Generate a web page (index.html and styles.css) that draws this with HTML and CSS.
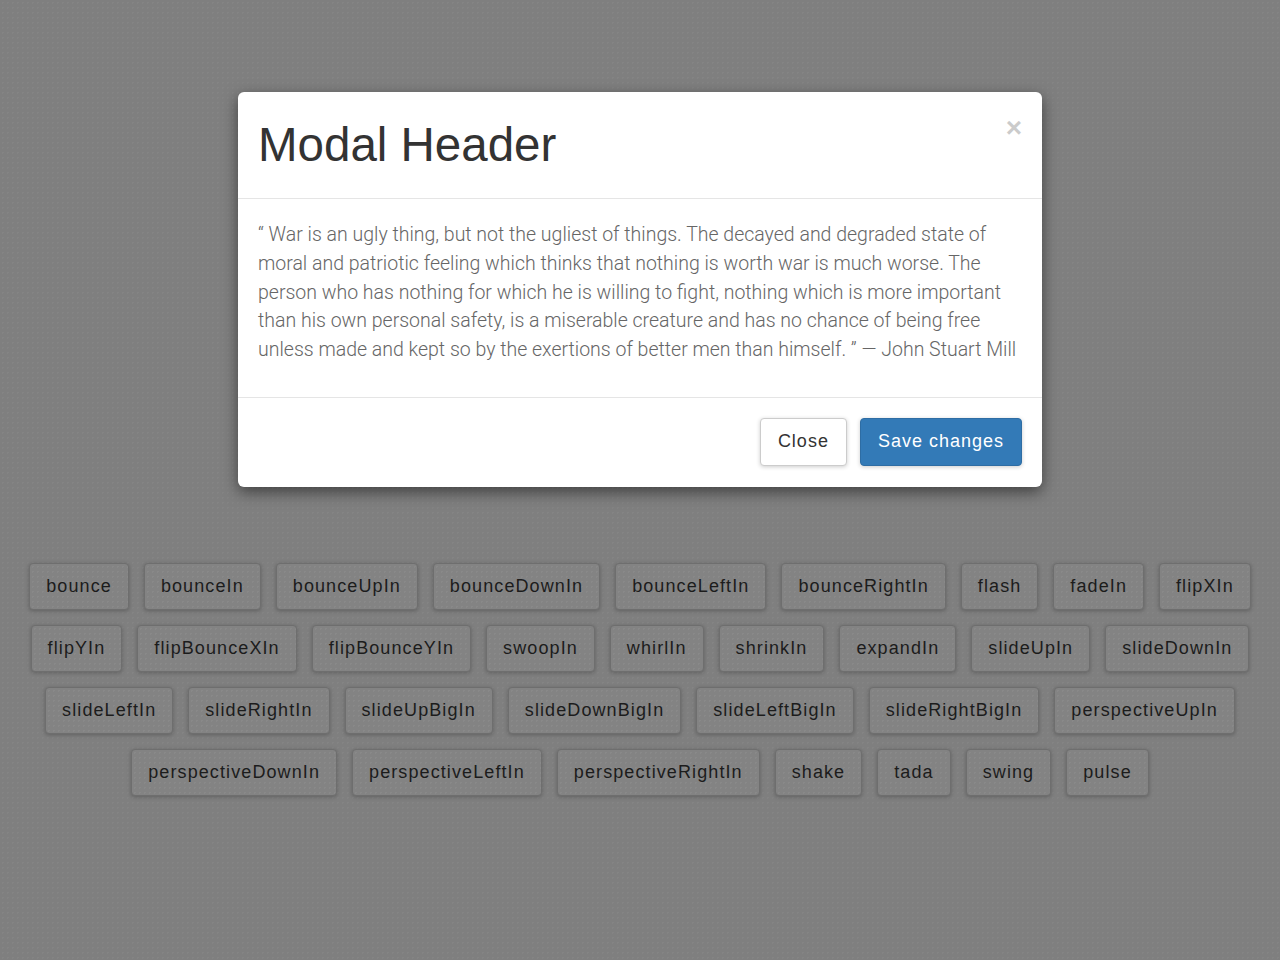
FILE: index.html
```html
<!DOCTYPE html>
<html lang="en">
<head>
    <meta charset="UTF-8">
    <meta name="viewport" content="width=device-width, initial-scale=1.0">
    <title>Modal Animations</title>
    <link rel="stylesheet" href="styles.css">
</head>
<body>

    <div class="modal">
        <div class="modal-header">
            <h1>Modal Header</h1>
            <button class="modal-x">&times;</button>
        </div>
        <div class="modal-body">
            <p>&ldquo; War is an ugly thing, but not the ugliest of things. The decayed and degraded state of moral and patriotic feeling which thinks that nothing is worth war is much worse. The person who has nothing for which he is willing to fight, nothing which is more important than his own personal safety, is a miserable creature and has no chance of being free unless made and kept so by the exertions of better men than himself. &rdquo; &mdash; John Stuart Mill</p>
        </div>
        <div class="modal-footer">
            <button class="btn btn-default">Close</button>
            <button class="btn btn-primary">Save changes</button>
        </div>
    </div>

    <div class="effects">
        <div class="effect-row">
            <button class="effect">bounce</button>
            <button class="effect">bounceIn</button>
            <button class="effect">bounceUpIn</button>
            <button class="effect">bounceDownIn</button>
            <button class="effect">bounceLeftIn</button>
            <button class="effect">bounceRightIn</button>
            <button class="effect">flash</button>
            <button class="effect">fadeIn</button>
            <button class="effect">flipXIn</button>
        </div>
        <div class="effect-row">
            <button class="effect">flipYIn</button>
            <button class="effect">flipBounceXIn</button>
            <button class="effect">flipBounceYIn</button>
            <button class="effect">swoopIn</button>
            <button class="effect">whirlIn</button>
            <button class="effect">shrinkIn</button>
            <button class="effect">expandIn</button>
            <button class="effect">slideUpIn</button>
            <button class="effect">slideDownIn</button>
        </div>
        <div class="effect-row">
            <button class="effect">slideLeftIn</button>
            <button class="effect">slideRightIn</button>
            <button class="effect">slideUpBigIn</button>
            <button class="effect">slideDownBigIn</button>
            <button class="effect">slideLeftBigIn</button>
            <button class="effect">slideRightBigIn</button>
            <button class="effect">perspectiveUpIn</button>
        </div>
        <div class="effect-row">
            <button class="effect">perspectiveDownIn</button>
            <button class="effect">perspectiveLeftIn</button>
            <button class="effect">perspectiveRightIn</button>
            <button class="effect">shake</button>
            <button class="effect">tada</button>
            <button class="effect">swing</button>
            <button class="effect">pulse</button>
        </div>
    </div>

</body>
</html>
```

FILE: styles.css
```css
body {
    margin: 0;
    padding-top: 92px;
    min-height: 868px;
    font-family: "Liberation Sans", Arial, sans-serif;
    background-color: #7f7f7f;
    background-image: radial-gradient(rgba(255, 255, 255, 0.04) 1px, transparent 1px);
    background-size: 5px 5px;
}
.modal {
    width: 804px;
    margin: 0 auto;
    background: white;
    border-radius: 6px;
    box-shadow: 0 5px 15px rgba(0, 0, 0, 0.5);
}
.modal-header {
    display: flex;
    justify-content: space-between;
    align-items: flex-start;
    padding: 20px;
    border-bottom: 1px solid #e5e5e5;
}
.modal-header h1 {
    margin: 0;
    font-size: 47.5px;
    font-weight: normal;
    line-height: 66px;
    color: #333;
}
.modal-x {
    margin: 2px 0 0 0;
    padding: 0;
    border: none;
    background: none;
    font-family: "Liberation Sans", Arial, sans-serif;
    font-size: 28px;
    font-weight: bold;
    line-height: 28px;
    color: #000;
    opacity: 0.2;
}
.modal-body {
    padding: 22px 20px 22px 20px;
}
.modal-body p {
    margin: 0 0 10px 0;
    font-family: Roboto, sans-serif;
    font-weight: 300;
    font-size: 19.5px;
    line-height: 28.8px;
    color: #666;
}
.modal-footer {
    display: flex;
    justify-content: flex-end;
    gap: 13px;
    padding: 20px 20px 21px 20px;
    border-top: 1px solid #e5e5e5;
}
.btn {
    height: 48px;
    padding: 0 17px;
    border: 1px solid transparent;
    border-radius: 4px;
    font-family: "Liberation Sans", Arial, sans-serif;
    font-size: 18px;
    letter-spacing: 1px;
    box-shadow: 0 1px 4px rgba(0, 0, 0, 0.2);
}
.btn-default {
    background: white;
    border-color: #ccc;
    color: #333;
}
.btn-primary {
    background: #337ab7;
    border-color: #2e6da4;
    color: white;
}
.effects {
    margin-top: 76px;
    display: flex;
    flex-direction: column;
    gap: 15px;
}
.effect-row {
    display: flex;
    justify-content: center;
    gap: 15px;
}
.effect {
    height: 47px;
    padding: 0 16px;
    border: 1px solid #6e6e6e;
    border-radius: 4px;
    background-color: #838383;
    background-image: radial-gradient(rgba(255, 255, 255, 0.05) 1px, transparent 1px);
    background-size: 5px 5px;
    box-shadow: 0 1px 4px rgba(0, 0, 0, 0.25);
    font-family: "Liberation Sans", Arial, sans-serif;
    font-size: 18px;
    letter-spacing: 1.1px;
    color: #1c1c1c;
}
```
